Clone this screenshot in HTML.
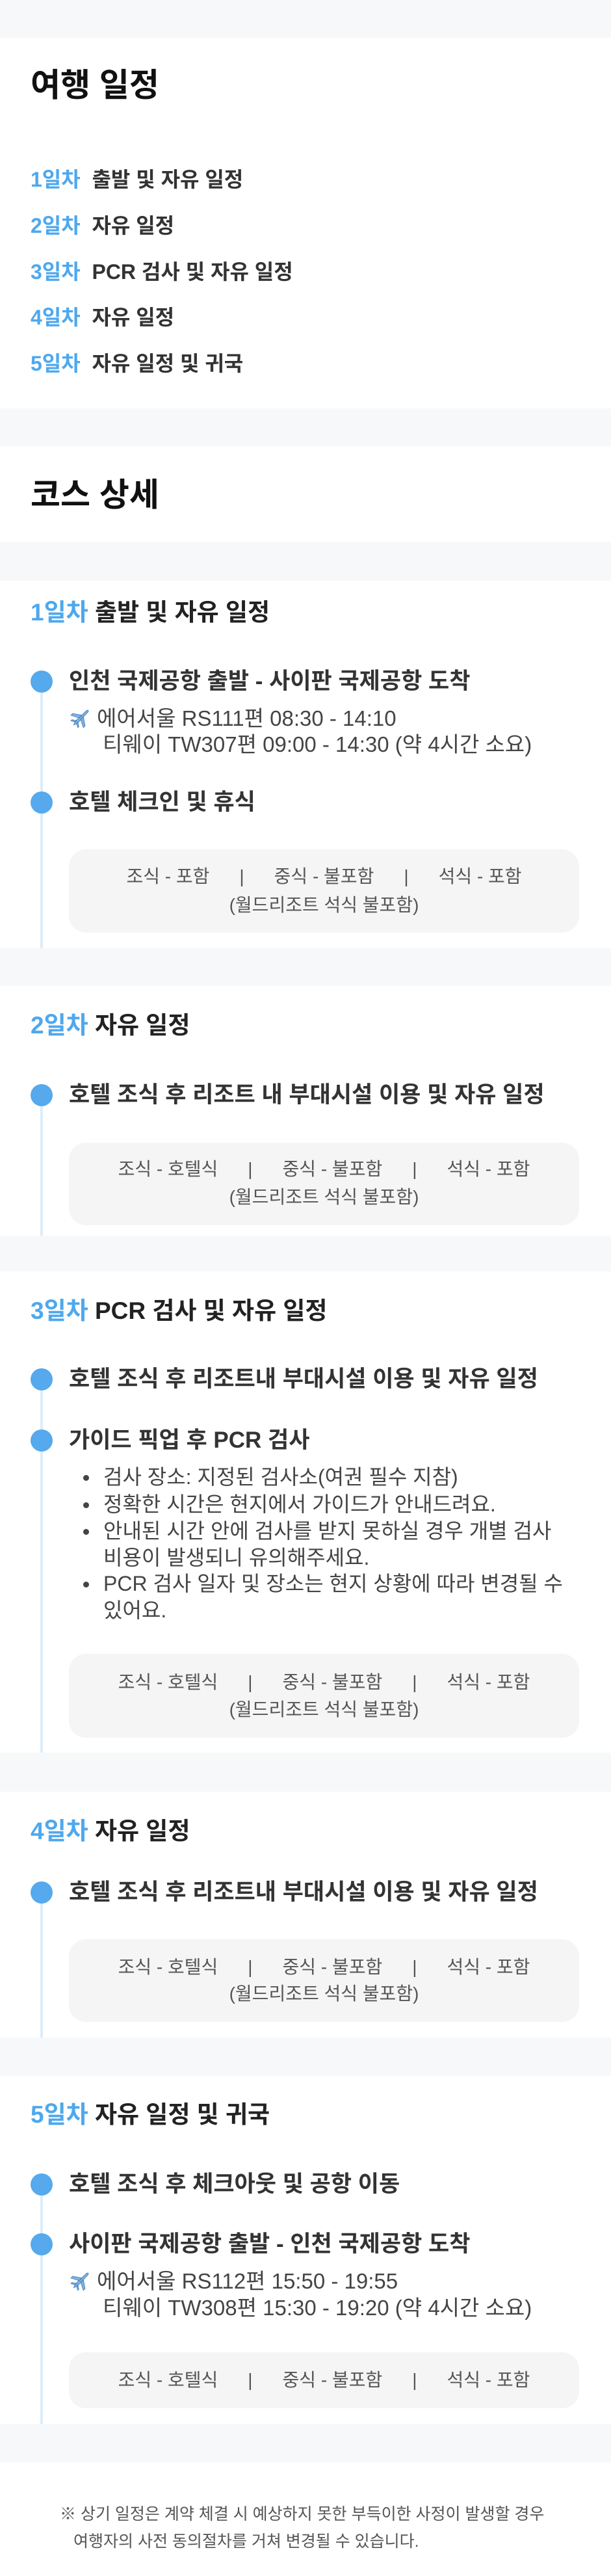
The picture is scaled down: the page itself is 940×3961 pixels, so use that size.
<!DOCTYPE html>
<html><head><meta charset="utf-8">
<style>
*{margin:0;padding:0;box-sizing:border-box}
body{width:940px;height:3961px;position:relative;background:#fff;font-family:"Liberation Sans","Noto Sans CJK KR",sans-serif;overflow:hidden}
.g{position:absolute;left:0;width:940px;background:#f7f8fa}
.t{position:absolute;white-space:nowrap;height:44px;line-height:44px}
.h1{font-size:50px;font-weight:700;color:#111;height:60px;line-height:60px}
.ov{font-size:32px;font-weight:700;color:#333}
.b{color:#4ea8ee}
.dh{font-size:37px;font-weight:700;color:#222}
.it{font-size:35px;font-weight:700;color:#333}
.fl{font-size:33px;color:#444}
.dot{position:absolute;left:47px;width:34px;height:34px;border-radius:50%;background:#55a9ec}
.ln{position:absolute;left:62px;width:4px;background:#dcecf9}
.box{position:absolute;left:106px;width:785px;background:#f5f5f5;border-radius:26px;color:#555;font-size:28px}
.row{position:absolute;left:0;width:100%;height:44px;line-height:44px;display:flex;justify-content:center;gap:46px;white-space:nowrap}
.bl{font-size:32px;color:#444}
.bd{position:absolute;left:128px;width:9px;height:9px;border-radius:50%;background:#444}
.fn{font-size:25px;color:#555}
.pl{position:absolute;left:106px;width:36px;height:36px}
</style></head><body>
<div class="g" style="top:0;height:58px"></div>
<div class="t h1" style="left:47px;top:101px">여행 일정</div>
<div class="t ov" style="left:47px;top:254px"><span class="b">1일차</span>&nbsp; 출발 및 자유 일정</div>
<div class="t ov" style="left:47px;top:325px"><span class="b">2일차</span>&nbsp; 자유 일정</div>
<div class="t ov" style="left:47px;top:396px"><span class="b">3일차</span>&nbsp; PCR 검사 및 자유 일정</div>
<div class="t ov" style="left:47px;top:466px"><span class="b">4일차</span>&nbsp; 자유 일정</div>
<div class="t ov" style="left:47px;top:537px"><span class="b">5일차</span>&nbsp; 자유 일정 및 귀국</div>
<div class="g" style="top:628px;height:58px"></div>
<div class="t h1" style="left:47px;top:731px">코스 상세</div>
<div class="g" style="top:833px;height:60px"></div>

<!-- Day 1 -->
<div class="t dh" style="left:47px;top:920px"><span class="b">1일차</span> 출발 및 자유 일정</div>
<div class="ln" style="top:1048px;height:410px"></div>
<div class="dot" style="top:1031px"></div>
<div class="t it" style="left:106px;top:1026px">인천 국제공항 출발 - 사이판 국제공항 도착</div>
<svg class="pl" style="top:1086px" viewBox="0 0 24 24"><g transform="rotate(-45 12 12)"><path d="M2 12 L6 10.5 L22 11 Q24 12 22 13 L6 13.5 L2 12Z M11 11 L7 3 L9.5 3 L15 11Z M11 13 L7 21 L9.5 21 L15 13Z M5 11 L3 7 L4.5 7 L7 11Z M5 13 L3 17 L4.5 17 L7 13Z" fill="#7fb3e3" stroke="#4a7fb5" stroke-width=".6"/></g></svg>
<div class="t fl" style="left:149px;top:1083px">에어서울 RS111편 08:30 - 14:10</div>
<div class="t fl" style="left:158px;top:1123px">티웨이 TW307편 09:00 - 14:30 (약 4시간 소요)</div>
<div class="dot" style="top:1217px"></div>
<div class="t it" style="left:106px;top:1212px">호텔 체크인 및 휴식</div>
<div class="box" style="top:1306px;height:128px">
<div class="row" style="top:20px"><span>조식 - 포함</span><span>|</span><span>중식 - 불포함</span><span>|</span><span>석식 - 포함</span></div>
<div class="row" style="top:64px"><span>(월드리조트 석식 불포함)</span></div>
</div>
<div class="g" style="top:1458px;height:58px"></div>

<!-- Day 2 -->
<div class="t dh" style="left:47px;top:1555px"><span class="b">2일차</span> 자유 일정</div>
<div class="ln" style="top:1684px;height:216px"></div>
<div class="dot" style="top:1667px"></div>
<div class="t it" style="left:106px;top:1662px">호텔 조식 후 리조트 내 부대시설 이용 및 자유 일정</div>
<div class="box" style="top:1757px;height:127px">
<div class="row" style="top:19px"><span>조식 - 호텔식</span><span>|</span><span>중식 - 불포함</span><span>|</span><span>석식 - 포함</span></div>
<div class="row" style="top:62px"><span>(월드리조트 석식 불포함)</span></div>
</div>
<div class="g" style="top:1900px;height:55px"></div>

<!-- Day 3 -->
<div class="t dh" style="left:47px;top:1994px"><span class="b">3일차</span> PCR 검사 및 자유 일정</div>
<div class="ln" style="top:2121px;height:574px"></div>
<div class="dot" style="top:2104px"></div>
<div class="t it" style="left:106px;top:2099px">호텔 조식 후 리조트내 부대시설 이용 및 자유 일정</div>
<div class="dot" style="top:2198px"></div>
<div class="t it" style="left:106px;top:2193px">가이드 픽업 후 PCR 검사</div>
<div class="bd" style="top:2268px"></div>
<div class="t bl" style="left:159px;top:2249px">검사 장소: 지정된 검사소(여권 필수 지참)</div>
<div class="bd" style="top:2310px"></div>
<div class="t bl" style="left:159px;top:2291px">정확한 시간은 현지에서 가이드가 안내드려요.</div>
<div class="bd" style="top:2351px"></div>
<div class="t bl" style="left:159px;top:2332px">안내된 시간 안에 검사를 받지 못하실 경우 개별 검사</div>
<div class="t bl" style="left:159px;top:2373px">비용이 발생되니 유의해주세요.</div>
<div class="bd" style="top:2432px"></div>
<div class="t bl" style="left:159px;top:2413px">PCR 검사 일자 및 장소는 현지 상황에 따라 변경될 수</div>
<div class="t bl" style="left:159px;top:2454px">있어요.</div>
<div class="box" style="top:2543px;height:129px">
<div class="row" style="top:22px"><span>조식 - 호텔식</span><span>|</span><span>중식 - 불포함</span><span>|</span><span>석식 - 포함</span></div>
<div class="row" style="top:64px"><span>(월드리조트 석식 불포함)</span></div>
</div>
<div class="g" style="top:2695px;height:60px"></div>

<!-- Day 4 -->
<div class="t dh" style="left:47px;top:2794px"><span class="b">4일차</span> 자유 일정</div>
<div class="ln" style="top:2910px;height:223px"></div>
<div class="dot" style="top:2893px"></div>
<div class="t it" style="left:106px;top:2888px">호텔 조식 후 리조트내 부대시설 이용 및 자유 일정</div>
<div class="box" style="top:2982px;height:127px">
<div class="row" style="top:21px"><span>조식 - 호텔식</span><span>|</span><span>중식 - 불포함</span><span>|</span><span>석식 - 포함</span></div>
<div class="row" style="top:62px"><span>(월드리조트 석식 불포함)</span></div>
</div>
<div class="g" style="top:3133px;height:59px"></div>

<!-- Day 5 -->
<div class="t dh" style="left:47px;top:3230px"><span class="b">5일차</span> 자유 일정 및 귀국</div>
<div class="ln" style="top:3359px;height:368px"></div>
<div class="dot" style="top:3342px"></div>
<div class="t it" style="left:106px;top:3337px">호텔 조식 후 체크아웃 및 공항 이동</div>
<div class="dot" style="top:3434px"></div>
<div class="t it" style="left:106px;top:3429px">사이판 국제공항 출발 - 인천 국제공항 도착</div>
<svg class="pl" style="top:3489px" viewBox="0 0 24 24"><g transform="rotate(-45 12 12)"><path d="M2 12 L6 10.5 L22 11 Q24 12 22 13 L6 13.5 L2 12Z M11 11 L7 3 L9.5 3 L15 11Z M11 13 L7 21 L9.5 21 L15 13Z M5 11 L3 7 L4.5 7 L7 11Z M5 13 L3 17 L4.5 17 L7 13Z" fill="#7fb3e3" stroke="#4a7fb5" stroke-width=".6"/></g></svg>
<div class="t fl" style="left:149px;top:3486px">에어서울 RS112편 15:50 - 19:55</div>
<div class="t fl" style="left:158px;top:3527px">티웨이 TW308편 15:30 - 19:20 (약 4시간 소요)</div>
<div class="box" style="top:3617px;height:86px">
<div class="row" style="top:21px"><span>조식 - 호텔식</span><span>|</span><span>중식 - 불포함</span><span>|</span><span>석식 - 포함</span></div>
</div>
<div class="g" style="top:3727px;height:59px"></div>

<div class="t fn" style="left:92px;top:3844px">※ 상기 일정은 계약 체결 시 예상하지 못한 부득이한 사정이 발생할 경우</div>
<div class="t fn" style="left:113px;top:3886px">여행자의 사전 동의절차를 거쳐 변경될 수 있습니다.</div>
</body></html>
